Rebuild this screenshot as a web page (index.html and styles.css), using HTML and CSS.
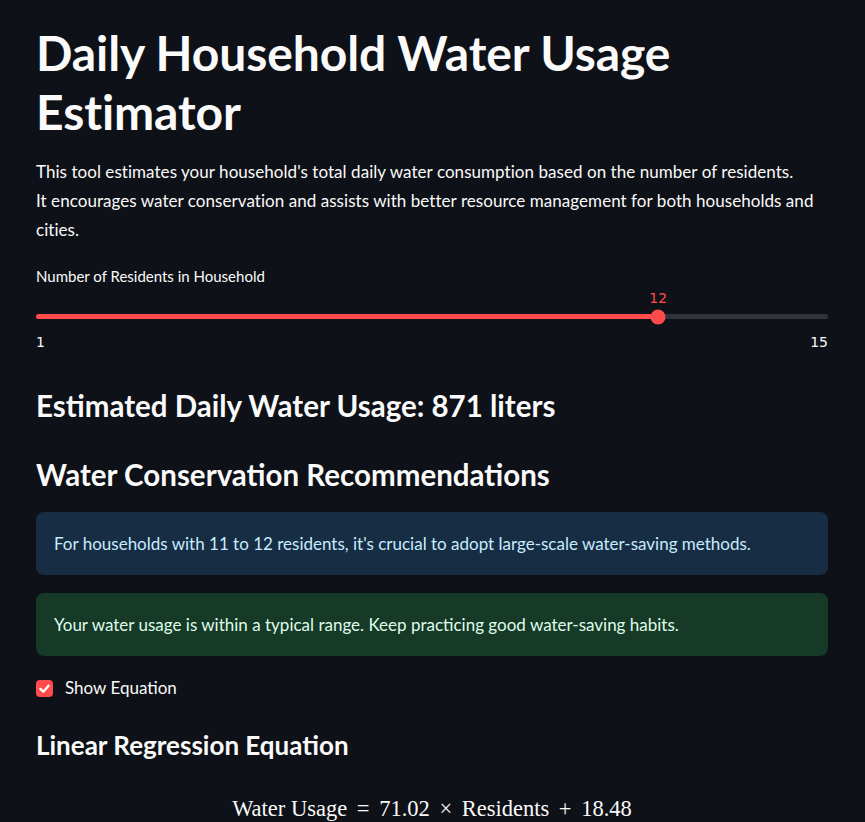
FILE: index.html
```html
<!DOCTYPE html>
<html lang="en">
<head>
<meta charset="utf-8">
<title>Daily Household Water Usage Estimator</title>
<link rel="stylesheet" href="styles.css">
</head>
<body>
<main class="container">
  <h1 class="title">Daily Household Water Usage Estimator</h1>
  <p class="intro">This tool estimates your household's total daily water consumption based on the number of residents.<br>It encourages water conservation and assists with better resource management for both households and cities.</p>

  <div class="slider">
    <div class="slider-label">Number of Residents in Household</div>
    <div class="slider-track-wrap">
      <div class="track">
        <div class="track-fill" style="width: 78.57%"></div>
        <div class="thumb" style="left: 78.57%"><span class="thumb-value">12</span></div>
      </div>
    </div>
    <div class="ticks"><span>1</span><span>15</span></div>
  </div>

  <h3 class="heading">Estimated Daily Water Usage: 871 liters</h3>
  <h3 class="heading">Water Conservation Recommendations</h3>

  <div class="alert alert-info">For households with 11 to 12 residents, it's crucial to adopt large-scale water-saving methods.</div>
  <div class="alert alert-success">Your water usage is within a typical range. Keep practicing good water-saving habits.</div>

  <label class="checkbox">
    <span class="box"><svg viewBox="0 0 16 16" width="13" height="13"><path d="M3 8.5 L6.5 12 L13 4.5" fill="none" stroke="#fff" stroke-width="2.8" stroke-linecap="round" stroke-linejoin="round"/></svg></span>
    <span class="checkbox-text">Show Equation</span>
  </label>

  <h3 class="heading heading-sm">Linear Regression Equation</h3>

  <div class="equation">Water Usage <span class="op">=</span> 71.02 <span class="op">×</span> Residents <span class="op">+</span> 18.48</div>
</main>
</body>
</html>
```

FILE: styles.css
```css
* { box-sizing: border-box; }
html, body {
  margin: 0;
  padding: 0;
  background: #0e1117;
  color: #fafafa;
  font-family: Lato, "Noto Sans", sans-serif;
}
.container {
  width: 792px;
  margin-left: 36px;
  padding-top: 23px;
}
.title {
  margin: 0;
  font-size: 48px;
  line-height: 59px;
  font-weight: 700;
  letter-spacing: -0.1px;
}
.intro {
  margin: 16px 0 0;
  font-size: 17px;
  line-height: 29px;
  letter-spacing: 0.05px;
}
.slider {
  margin-top: 22px;
}
.slider-label {
  font-size: 15px;
  line-height: 20px;
}
.slider-track-wrap {
  padding-top: 28px;
}
.track {
  position: relative;
  height: 5px;
  border-radius: 3px;
  background: #31333c;
}
.track-fill {
  height: 100%;
  border-radius: 3px;
  background: #ff4b4b;
}
.thumb {
  position: absolute;
  top: 50%;
  width: 15px;
  height: 15px;
  border-radius: 50%;
  background: #ff4b4b;
  transform: translate(-50%, -50%);
}
.thumb-value {
  position: absolute;
  left: 50%;
  bottom: 19px;
  transform: translateX(-50%);
  color: #ff4b4b;
  font-family: "DejaVu Sans", sans-serif;
  font-size: 14px;
  line-height: 16px;
}
.ticks {
  display: flex;
  justify-content: space-between;
  font-family: "DejaVu Sans", sans-serif;
  font-size: 14px;
  line-height: 16px;
  margin-top: 15px;
}
.heading {
  margin: 0;
  font-size: 29.5px;
  line-height: 36px;
  font-weight: 700;
  letter-spacing: 0;
}
.heading-sm {
  font-size: 26px;
}
.slider + .heading { margin-top: 38px; }
.heading + .heading { margin-top: 33px; }
.alert {
  border-radius: 8px;
  padding: 0 18px;
  height: 63px;
  display: flex;
  align-items: center;
  font-size: 17px;
}
.heading + .alert { margin-top: 19px; }
.alert + .alert { margin-top: 18px; }
.alert-info {
  background: #172d43;
  color: #c7ebff;
}
.alert-success {
  background: #173928;
  color: #dffde9;
}
.checkbox {
  display: flex;
  align-items: center;
  gap: 12px;
  margin-top: 22px;
  font-size: 17px;
  line-height: 20px;
}
.box {
  width: 17px;
  height: 17px;
  border-radius: 4px;
  background: #ff4b4b;
  display: flex;
  align-items: center;
  justify-content: center;
}
.checkbox + .heading { margin-top: 29px; }
.equation {
  margin-top: 33px;
  text-align: center;
  font-family: "Liberation Serif", "DejaVu Serif", serif;
  font-size: 22.5px;
  line-height: 26px;
}
.op { padding: 0 4px; }
```
